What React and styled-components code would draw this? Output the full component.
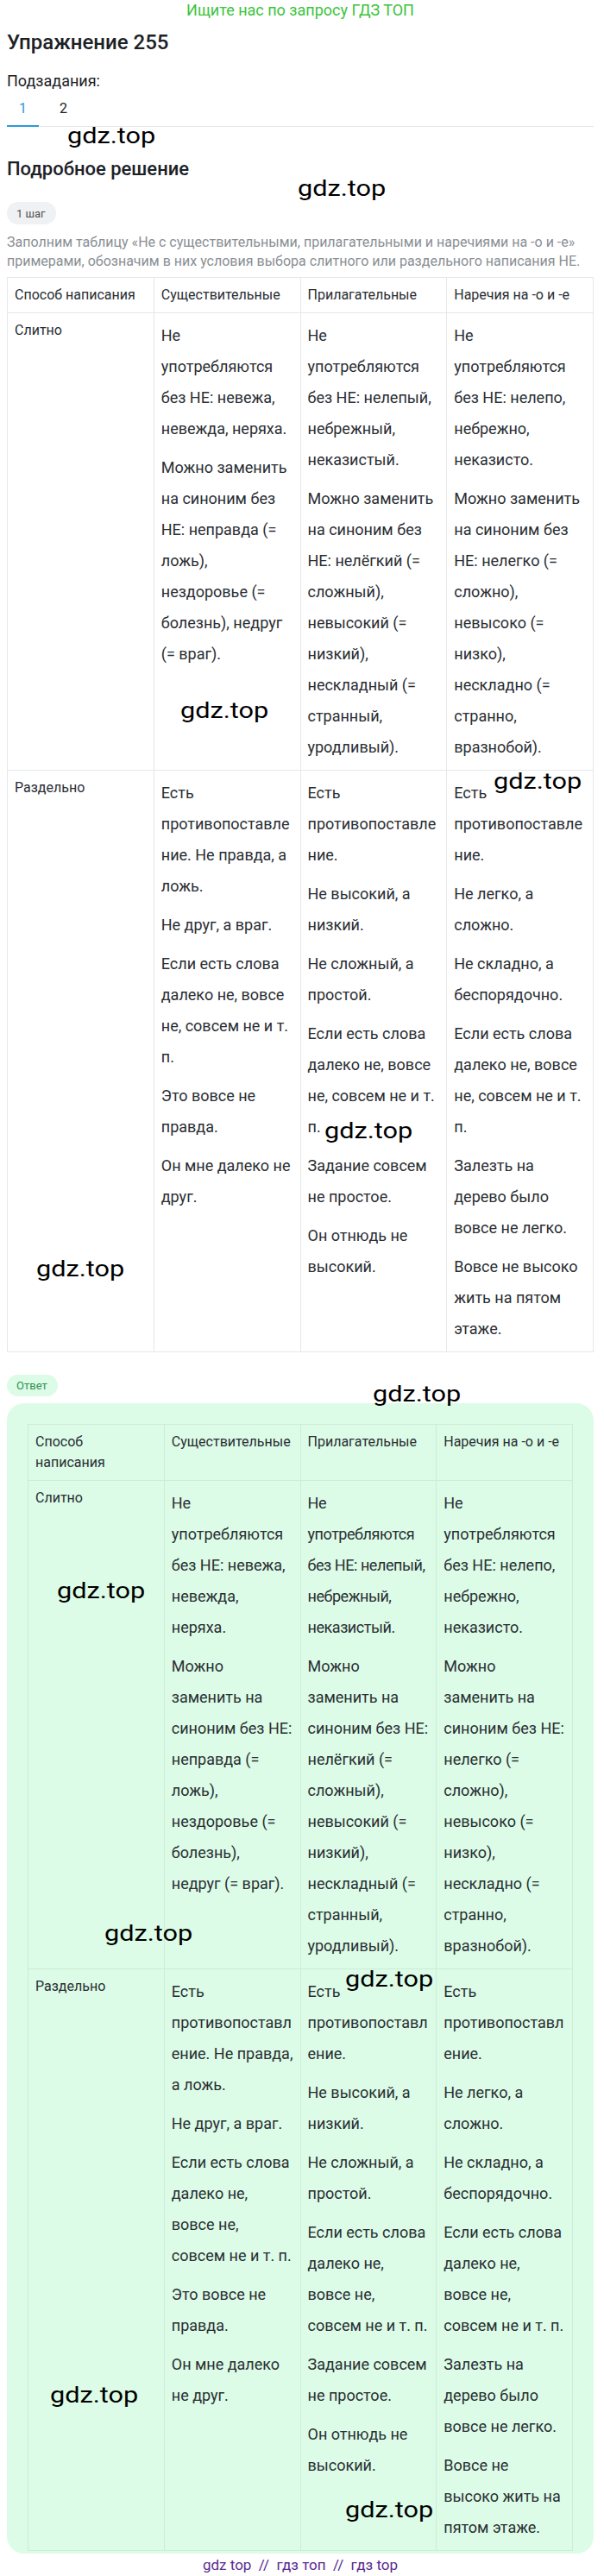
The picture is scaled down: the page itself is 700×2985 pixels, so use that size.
import React from 'react';
import styled, { createGlobalStyle } from 'styled-components';

const GlobalStyle = createGlobalStyle`
  html, body { margin: 0; padding: 0; background: #ffffff; }
  body {
    font-family: Roboto, "Liberation Sans", Arial, sans-serif;
    color: #1c2126;
    -webkit-font-smoothing: antialiased;
  }
`;

const Root = styled.div`
  position: relative;
  width: 700px;
`;

const Content = styled.div`
  width: 680px;
  margin-left: 8px;
`;

const Banner = styled.div`
  font-size: 18px;
  line-height: 24px;
  color: #3cc43c;
  text-align: center;
`;

const Title = styled.h1`
  margin: 9px 0 0;
  font-size: 24px;
  line-height: 32px;
  font-weight: 500;
  color: #1c2126;
`;

const SubLabel = styled.div`
  margin-top: 17px;
  font-size: 18px;
  line-height: 24px;
  color: #1c2126;
`;

const TabBar = styled.div`
  display: flex;
  gap: 10px;
  border-bottom: 1px solid #e4e6e9;
`;

const Tab = styled.div`
  position: relative;
  padding: 8px 14px;
  font-size: 16px;
  line-height: 24px;
  color: ${p => (p.$active ? '#2b9bd8' : '#1c2126')};
  &::after {
    content: '';
    position: absolute;
    left: 0;
    right: 0;
    bottom: -1px;
    height: 2px;
    background: ${p => (p.$active ? '#2b9bd8' : 'transparent')};
  }
`;

const SectionTitle = styled.h2`
  margin: 35px 0 0;
  font-size: 22px;
  line-height: 28px;
  font-weight: 500;
  color: #1c2126;
`;

const Pill = styled.div`
  display: inline-flex;
  align-items: center;
  height: ${p => p.$h}px;
  margin-top: ${p => p.$mt}px;
  padding: 0 12px 0 11px;
  border-radius: 14px;
  font-size: 13px;
  background: ${p => p.$bg};
  color: ${p => p.$fg};
`;

const Intro = styled.p`
  margin: 10px 0 0;
  font-size: 16px;
  line-height: 21.5px;
  color: #8a8f95;
`;

const Table = styled.table`
  width: 100%;
  margin-top: ${p => p.$mt || 0}px;
  border-collapse: collapse;
  table-layout: fixed;
  border: 1px solid ${p => p.$line};
`;

const Cell = styled.td`
  border: 1px solid ${p => p.$line};
  padding: 8px ${p => p.$padRight || 8}px 8px 8px;
  vertical-align: top;
  text-align: left;
  font-size: 16px;
  line-height: 24px;
  font-weight: 400;
  color: #2a2e33;
  overflow-wrap: break-word;
  word-break: break-word;
`;

const Para = styled.p`
  margin: 0;
  font-size: 18px;
  line-height: 36px;
  color: #2a2e33;
  letter-spacing: ${p => (p.$tight ? '-0.45px' : 'normal')};
  & + & { margin-top: 9px; }
`;

const AnswerBox = styled.div`
  margin-top: 8px;
  padding: 24px 24px 3px;
  border-radius: 20px;
  background: #dcfce7;
`;

const Footer = styled.div`
  font-size: 17px;
  line-height: 26px;
  text-align: center;
  color: #5b2a91;
  white-space: pre;
`;

const Watermark = styled.div`
  position: absolute;
  font-family: Roboto, "Liberation Sans", Arial, sans-serif;
  font-size: 26px;
  line-height: 26px;
  color: #000;
  transform: scaleX(1.18);
  transform-origin: left top;
  pointer-events: none;
  white-space: nowrap;
`;

const headers = ['Способ написания', 'Существительные', 'Прилагательные', 'Наречия на -о и -е'];

const rows = [
  {
    label: 'Слитно',
    cols: [
      [
        'Не употребляются без НЕ: невежа, невежда, неряха.',
        'Можно заменить на синоним без НЕ: неправда (= ложь), нездоровье (= болезнь), недруг (= враг).',
      ],
      [
        'Не употребляются без НЕ: нелепый, небрежный, неказистый.',
        'Можно заменить на синоним без НЕ: нелёгкий (= сложный), невысокий (= низкий), нескладный (= странный, уродливый).',
      ],
      [
        'Не употребляются без НЕ: нелепо, небрежно, неказисто.',
        'Можно заменить на синоним без НЕ: нелегко (= сложно), невысоко (= низко), нескладно (= странно, вразнобой).',
      ],
    ],
  },
  {
    label: 'Раздельно',
    cols: [
      [
        'Есть противопоставление. Не правда, а ложь.',
        'Не друг, а враг.',
        'Если есть слова далеко не, вовсе не, совсем не и т. п.',
        'Это вовсе не правда.',
        'Он мне далеко не друг.',
      ],
      [
        'Есть противопоставление.',
        'Не высокий, а низкий.',
        'Не сложный, а простой.',
        'Если есть слова далеко не, вовсе не, совсем не и т. п.',
        'Задание совсем не простое.',
        'Он отнюдь не высокий.',
      ],
      [
        'Есть противопоставление.',
        'Не легко, а сложно.',
        'Не складно, а беспорядочно.',
        'Если есть слова далеко не, вовсе не, совсем не и т. п.',
        'Залезть на дерево было вовсе не легко.',
        'Вовсе не высоко жить на пятом этаже.',
      ],
    ],
  },
];

const marks = [
  [78, 144], [345, 205], [209, 810], [572, 892], [376, 1297], [42, 1457],
  [432, 1602], [66, 1830], [121, 2227], [400, 2280], [58, 2762], [400, 2895],
];

// In the narrower answer table the text wraps a little differently.
const narrowText = t =>
  t
    .replace('противопоставление', 'противопоставл\u200Bение')
    .replace('недруг (= враг)', 'недруг\u00A0(=\u00A0враг)');

function RuleTable({ line, mt, narrow }) {
  return (
    <Table $line={line} $mt={mt}>
      <tbody>
        <tr>
          {headers.map((h, i) => (
            <Cell key={h} $line={line} $padRight={narrow && i === 0 ? 12 : 8}>{h}</Cell>
          ))}
        </tr>
        {rows.map(r => (
          <tr key={r.label}>
            <Cell $line={line}>{r.label}</Cell>
            {r.cols.map((ps, i) => (
              <Cell key={i} $line={line}>
                {ps.map((t, j) => (
                  <Para key={j} $tight={narrow && t.includes('нелепый,')}>
                    {narrow ? narrowText(t) : t}
                  </Para>
                ))}
              </Cell>
            ))}
          </tr>
        ))}
      </tbody>
    </Table>
  );
}

export default function App() {
  return (
    <Root>
      <GlobalStyle />
      <Content>
        <Banner>Ищите нас по запросу ГДЗ ТОП</Banner>
        <Title>Упражнение 255</Title>
        <SubLabel>Подзадания:</SubLabel>
        <TabBar>
          <Tab $active>1</Tab>
          <Tab>2</Tab>
        </TabBar>
        <SectionTitle>Подробное решение</SectionTitle>
        <Pill $h={26} $mt={24} $bg="#f0f1f3" $fg="#4b5056">1 шаг</Pill>
        <Intro>
          Заполним таблицу «Не с существительными, прилагательными и наречиями на -о и -е» примерами, обозначим в них условия выбора слитного или раздельного написания НЕ.
        </Intro>
        <RuleTable line="#e5e7ea" mt={8} />
        <Pill $h={25} $mt={26} $bg="#dcfce7" $fg="#2f8f4e">Ответ</Pill>
        <AnswerBox>
          <RuleTable line="#cdebd7" narrow />
        </AnswerBox>
        <Footer>{'gdz top  //  гдз топ  //  гдз top'}</Footer>
      </Content>
      {marks.map(([x, y], i) => (
        <Watermark key={i} style={{ left: x, top: y }}>gdz.top</Watermark>
      ))}
    </Root>
  );
}
